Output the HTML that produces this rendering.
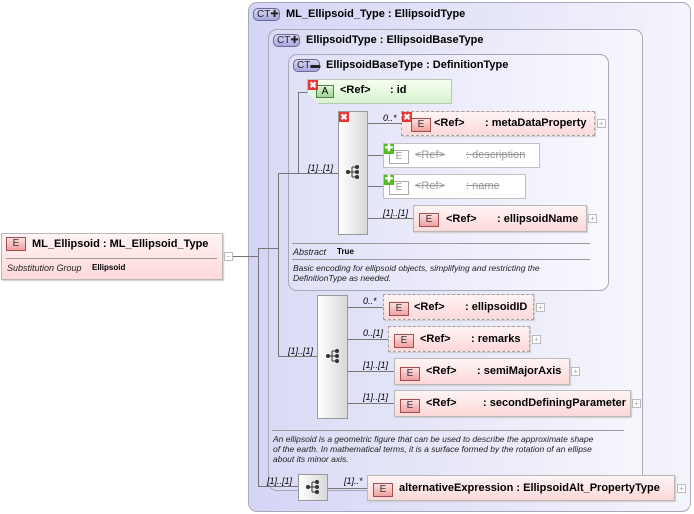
<!DOCTYPE html>
<html><head><meta charset="utf-8"><style>
*{margin:0;padding:0;box-sizing:border-box}
body{width:694px;height:514px;background:#fff;position:relative;overflow:hidden;font-family:"Liberation Sans",Arial,sans-serif;font-size:11px;color:#000}
.a{position:absolute}
.ct{position:absolute;border:1px solid #a8a8b8;border-radius:9px}
.badge{position:absolute;height:13px;border:1px solid #6a6a9a;border-radius:5px;background:linear-gradient(#d8d8f4,#a8a8e0);font-size:10px;line-height:11px;padding-left:3px;color:#222}
.t{position:absolute;font-weight:bold;font-size:11px;white-space:nowrap}
.el{position:absolute;background:linear-gradient(#fff4f4,#fdd8d8);border:1px solid #b8b8b8;box-shadow:1px 1px 1px #ccc}
.dash{border:1px dashed #a0a0a0}
.gray{background:#fff;border:1px solid #c0c0c0}
.E{position:absolute;width:20px;height:14px;border:1px solid #a05050;background:linear-gradient(#fde0e0,#f0a0a0);font-size:10px;line-height:12px;text-align:center;color:#333}
.gray .E{border-color:#aaa;background:#fff;color:#999}
.nm{position:absolute;font-weight:bold;font-size:11px;white-space:nowrap;top:5px}
.gray .nm{color:#999;font-weight:normal;text-decoration:line-through}
.pl{position:absolute;width:9px;height:9px;border:1px solid #bbb;background:#fff;font-size:8px;line-height:7px;text-align:center;color:#aaa}
.lab{position:absolute;font-style:italic;font-size:9px;white-space:nowrap}
.h{position:absolute;height:1px;background:#777}
.v{position:absolute;width:1px;background:#777}
.seq{position:absolute;border:1px solid #999;background:linear-gradient(90deg,#fff,#d8d8d8)}
.x{position:absolute;width:10px;height:10px;background:#e33;color:#fff;font-size:9px;line-height:10px;text-align:center;font-weight:bold}
.g{position:absolute;width:10px;height:10px;background:#5b2;color:#fff;font-size:10px;line-height:10px;text-align:center;font-weight:bold}
.small{position:absolute;font-size:9px;font-style:italic;color:#222;line-height:10px}
</style></head><body>

<div class="ct" style="left:248px;top:2px;width:443px;height:510px;background:linear-gradient(90deg,#d4d4f6,#f4f4fc)"></div>
<div class="badge" style="left:253px;top:8px;width:27px">CT✚</div>
<div class="t" style="left:286px;top:8px">ML_Ellipsoid_Type : EllipsoidType</div>

<div class="ct" style="left:268px;top:29px;width:375px;height:462px;background:linear-gradient(90deg,#dadaf6,#f6f6fc)"></div>
<div class="badge" style="left:273px;top:34px;width:27px">CT✚</div>
<div class="t" style="left:306px;top:34px">EllipsoidType : EllipsoidBaseType</div>

<div class="ct" style="left:288px;top:54px;width:321px;height:237px;background:linear-gradient(90deg,#e0e0f8,#f8f8fe)"></div>
<div class="badge" style="left:293px;top:59px;width:27px">CT▬</div>
<div class="t" style="left:326px;top:59px">EllipsoidBaseType : DefinitionType</div>

<!-- left element -->
<div class="el" style="left:1px;top:233px;width:222px;height:47px"></div>
<div class="E" style="left:6px;top:237px">E</div>
<div class="t" style="left:32px;top:238px;font-size:11px">ML_Ellipsoid : ML_Ellipsoid_Type</div>
<div class="h" style="left:6px;top:258px;width:211px;background:#999"></div>
<div class="small" style="left:7px;top:263px">Substitution Group</div>
<div class="a" style="left:92px;top:263px;font-size:8px;font-weight:bold">Ellipsoid</div>
<div class="pl" style="left:224px;top:252px">−</div>

<!-- connectors -->
<div class="h" style="left:233px;top:256px;width:25px"></div>
<div class="v" style="left:258px;top:248px;height:239px"></div>
<div class="h" style="left:258px;top:248px;width:20px"></div>
<div class="h" style="left:258px;top:486px;width:40px"></div>
<div class="v" style="left:278px;top:173px;height:184px"></div>
<div class="h" style="left:278px;top:173px;width:20px"></div>
<div class="h" style="left:278px;top:356px;width:39px"></div>
<div class="v" style="left:298px;top:92px;height:82px"></div>
<div class="h" style="left:298px;top:92px;width:12px"></div>
<div class="h" style="left:298px;top:173px;width:40px"></div>

<!-- id attribute -->
<div class="a" style="left:307px;top:79px;width:145px;height:25px;background:linear-gradient(#f4fff0,#d8f4d0);border:1px solid #b8c8b0;clip-path:polygon(0 0,100% 0,100% 100%,12px 100%,0 14px)"></div>
<div class="a" style="left:316px;top:85px;width:18px;height:13px;border:1px solid #508050;background:linear-gradient(#dff5d8,#9ed690);font-size:10px;text-align:center;line-height:11px">A</div>
<div class="x" style="left:308px;top:80px">✖</div>
<div class="t" style="left:340px;top:84px">&lt;Ref&gt;</div>
<div class="t" style="left:390px;top:84px">: id</div>

<!-- seq 1 -->
<div class="seq" style="left:338px;top:111px;width:30px;height:124px"></div>
<div class="x" style="left:339px;top:112px">✖</div>
<svg class="a" style="left:345px;top:164px" width="16" height="16"><circle cx="3" cy="8" r="2" fill="#333"/><path d="M3 8H7M7 3V13M7 3H12M7 8H12M7 13H12" stroke="#333" fill="none"/><circle cx="12" cy="3" r="2" fill="#333"/><circle cx="12" cy="8" r="2" fill="#333"/><circle cx="12" cy="13" r="2" fill="#333"/></svg>

<div class="h" style="left:368px;top:123px;width:33px"></div>
<div class="lab" style="left:383px;top:113px">0..*</div>
<div class="el dash" style="left:401px;top:111px;width:194px;height:25px"><div class="E" style="left:9px;top:6px">E</div><div class="nm" style="left:32px">&lt;Ref&gt;</div><div class="nm" style="left:83px">: metaDataProperty</div></div>
<div class="x" style="left:402px;top:112px">✖</div>
<div class="pl" style="left:597px;top:119px">+</div>

<div class="h" style="left:368px;top:155px;width:15px"></div>
<div class="el gray" style="left:383px;top:143px;width:157px;height:25px;box-shadow:none"><div class="E" style="left:5px;top:6px">E</div><div class="nm" style="left:31px">&lt;Ref&gt;</div><div class="nm" style="left:82px">: description</div></div>
<div class="g" style="left:384px;top:144px">✚</div>

<div class="h" style="left:368px;top:186px;width:15px"></div>
<div class="el gray" style="left:383px;top:174px;width:143px;height:25px;box-shadow:none"><div class="E" style="left:5px;top:6px">E</div><div class="nm" style="left:31px">&lt;Ref&gt;</div><div class="nm" style="left:82px">: name</div></div>
<div class="g" style="left:384px;top:175px">✚</div>

<div class="h" style="left:368px;top:218px;width:45px"></div>
<div class="lab" style="left:383px;top:208px">[1]..[1]</div>
<div class="el" style="left:413px;top:205px;width:174px;height:27px"><div class="E" style="left:5px;top:7px">E</div><div class="nm" style="left:32px;top:7px">&lt;Ref&gt;</div><div class="nm" style="left:83px;top:7px">: ellipsoidName</div></div>
<div class="pl" style="left:588px;top:214px">+</div>
<div class="lab" style="left:308px;top:163px">[1]..[1]</div>

<div class="h" style="left:292px;top:243px;width:298px;background:#999"></div>
<div class="small" style="left:293px;top:247px">Abstract</div>
<div class="a" style="left:337px;top:247px;font-size:8px;font-weight:bold">True</div>
<div class="h" style="left:292px;top:259px;width:298px;background:#999"></div>
<div class="small" style="left:293px;top:263px;font-size:8.5px">Basic encoding for ellipsoid objects, simplifying and restricting the<br>DefinitionType as needed.</div>

<!-- seq 2 -->
<div class="lab" style="left:288px;top:346px">[1]..[1]</div>
<div class="seq" style="left:317px;top:295px;width:31px;height:124px"></div>
<svg class="a" style="left:325px;top:348px" width="16" height="16"><circle cx="3" cy="8" r="2" fill="#333"/><path d="M3 8H7M7 3V13M7 3H12M7 8H12M7 13H12" stroke="#333" fill="none"/><circle cx="12" cy="3" r="2" fill="#333"/><circle cx="12" cy="8" r="2" fill="#333"/><circle cx="12" cy="13" r="2" fill="#333"/></svg>

<div class="h" style="left:348px;top:307px;width:35px"></div>
<div class="lab" style="left:363px;top:296px">0..*</div>
<div class="el dash" style="left:383px;top:294px;width:151px;height:26px"><div class="E" style="left:5px;top:7px">E</div><div class="nm" style="left:30px;top:6px">&lt;Ref&gt;</div><div class="nm" style="left:81px;top:6px">: ellipsoidID</div></div>
<div class="pl" style="left:536px;top:303px">+</div>

<div class="h" style="left:348px;top:339px;width:40px"></div>
<div class="lab" style="left:363px;top:328px">0..[1]</div>
<div class="el dash" style="left:388px;top:326px;width:142px;height:26px"><div class="E" style="left:5px;top:7px">E</div><div class="nm" style="left:31px;top:6px">&lt;Ref&gt;</div><div class="nm" style="left:82px;top:6px">: remarks</div></div>
<div class="pl" style="left:532px;top:335px">+</div>

<div class="h" style="left:348px;top:371px;width:46px"></div>
<div class="lab" style="left:363px;top:360px">[1]..[1]</div>
<div class="el" style="left:394px;top:358px;width:176px;height:27px"><div class="E" style="left:5px;top:8px">E</div><div class="nm" style="left:31px;top:6px">&lt;Ref&gt;</div><div class="nm" style="left:82px;top:6px">: semiMajorAxis</div></div>
<div class="pl" style="left:571px;top:367px">+</div>

<div class="h" style="left:348px;top:403px;width:46px"></div>
<div class="lab" style="left:363px;top:392px">[1]..[1]</div>
<div class="el" style="left:394px;top:390px;width:237px;height:27px"><div class="E" style="left:5px;top:8px">E</div><div class="nm" style="left:31px;top:6px">&lt;Ref&gt;</div><div class="nm" style="left:88px;top:6px">: secondDefiningParameter</div></div>
<div class="pl" style="left:632px;top:399px">+</div>

<div class="h" style="left:272px;top:430px;width:352px;background:#999"></div>
<div class="small" style="left:273px;top:434px;font-size:8.5px">An ellipsoid is a geometric figure that can be used to describe the approximate shape<br>of the earth. In mathematical terms, it is a surface formed by the rotation of an ellipse<br>about its minor axis.</div>

<!-- bottom -->
<div class="lab" style="left:267px;top:476px">[1]..[1]</div>
<div class="seq" style="left:298px;top:474px;width:30px;height:27px"></div>
<svg class="a" style="left:305px;top:479px" width="16" height="16"><circle cx="3" cy="8" r="2" fill="#333"/><path d="M3 8H7M7 3V13M7 3H12M7 8H12M7 13H12" stroke="#333" fill="none"/><circle cx="12" cy="3" r="2" fill="#333"/><circle cx="12" cy="8" r="2" fill="#333"/><circle cx="12" cy="13" r="2" fill="#333"/></svg>
<div class="h" style="left:328px;top:488px;width:39px"></div>
<div class="lab" style="left:344px;top:476px">[1]..*</div>
<div class="el" style="left:367px;top:475px;width:308px;height:26px"><div class="E" style="left:5px;top:7px">E</div><div class="nm" style="left:31px;top:6px">alternativeExpression : EllipsoidAlt_PropertyType</div></div>
<div class="pl" style="left:677px;top:484px">+</div>

</body></html>
